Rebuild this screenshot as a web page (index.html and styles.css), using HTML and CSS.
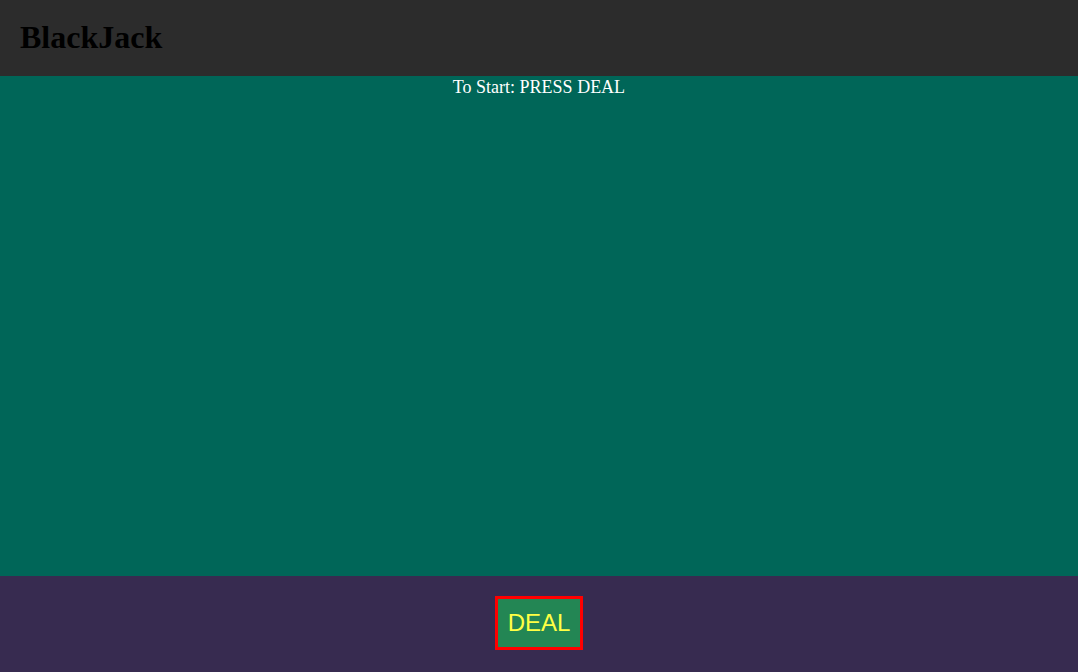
FILE: index.html
```html
<!DOCTYPE html>
<html>
<head>
<meta charset="utf-8">
<title>BlackJack</title>
<link rel="stylesheet" href="styles.css">
</head>
<body>
<header class="top">
  <h1 class="title">BlackJack</h1>
</header>
<main class="table">
  <p class="status">To Start: PRESS DEAL</p>
</main>
<footer class="controls">
  <button class="deal">DEAL</button>
</footer>
</body>
</html>
```
FILE: styles.css
```css
html, body {
  margin: 0;
  padding: 0;
  height: 100%;
}
body {
  display: flex;
  flex-direction: column;
  font-family: "Liberation Serif", "Times New Roman", serif;
  background: #372b50;
}
.top {
  height: 76px;
  background: #2c2c2c;
  display: flex;
  align-items: center;
  padding-left: 20px;
  box-sizing: border-box;
}
.title {
  margin: 0;
  font-size: 32px;
  font-weight: bold;
  color: #000;
  line-height: 1;
  position: relative;
  top: -1px;
}
.table {
  height: 500px;
  background: #006658;
}
.status {
  margin: 0;
  text-align: center;
  color: #fff;
  font-size: 18px;
  line-height: 22px;
}
.controls {
  flex: 1;
  background: #372b50;
  display: flex;
  justify-content: center;
  align-items: flex-start;
  padding-top: 20px;
}
.deal {
  width: 88px;
  height: 54px;
  border: 3px solid #ff0000;
  background: #238654;
  color: #ffff44;
  font-family: "Liberation Sans", Arial, sans-serif;
  font-size: 24px;
  padding: 0;
  box-sizing: border-box;
}
```
